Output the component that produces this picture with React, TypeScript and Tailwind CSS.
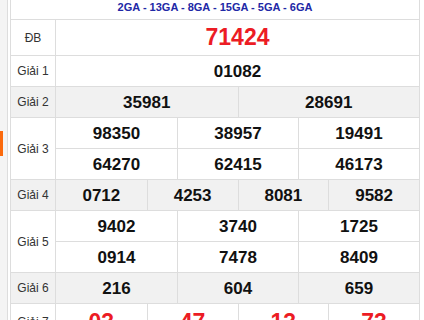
import React from "react";

const FONT = "font-['Liberation_Sans',Arial,sans-serif]";

type Val = { v: string; red?: boolean };

function Label({ text }: { text: string }) {
  return (
    <div className="w-[45px] shrink-0 border-r border-[#dddddd] flex items-center justify-center text-[12px] text-[#333333]">
      {text}
    </div>
  );
}

function Num({ v, red }: Val) {
  return red ? (
    <span className="text-[23px] leading-none font-bold text-[#ec1c24]">{v}</span>
  ) : (
    <span className="text-[17px] leading-none font-bold text-[#111111]">{v}</span>
  );
}

function Row({
  label,
  gray,
  cols,
  values,
  tall,
}: {
  label: string;
  gray?: boolean;
  cols: 1 | 2 | 3 | 4;
  values: Val[];
  tall?: boolean;
}) {
  const gridCls =
    cols === 1
      ? "grid-cols-1"
      : cols === 2
      ? "grid-cols-2"
      : cols === 3
      ? "grid-cols-3"
      : "grid-cols-4";
  const rowsCount = Math.ceil(values.length / cols);
  return (
    <div
      className={
        "flex border-b border-[#dddddd] " + (gray ? "bg-[#f1f1f1]" : "bg-white")
      }
    >
      <Label text={label} />
      <div className={"flex-1 grid " + gridCls}>
        {values.map((val, i) => {
          const col = i % cols;
          const r = Math.floor(i / cols);
          const last = r === rowsCount - 1;
          let cls = "flex items-center justify-center ";
          cls += tall ? "h-[35px] " : last ? "h-[30px] " : "h-[31px] border-b border-[#dddddd] ";
          if (col > 0) cls += "border-l border-[#dddddd] ";
          return (
            <div key={i} className={cls}>
              <Num {...val} />
            </div>
          );
        })}
      </div>
    </div>
  );
}

const n = (arr: string[], red = false): Val[] => arr.map((v) => ({ v, red }));

export default function App() {
  return (
    <div className={"w-[424px] h-[320px] overflow-hidden flex bg-white " + FONT}>
      <div className="w-[8px] shrink-0 bg-[#f4f4f4] border-r border-[#dddddd] flex flex-col">
        <div className="mt-[131px] h-[25px] w-[3px] bg-[#fb6a0d]" />
      </div>
      <div className="w-[410px] ml-[2px] shrink-0 border-l border-r border-[#dddddd] flex flex-col">
        <div className="h-[20px] shrink-0 border-b border-[#dddddd] pt-[1px] text-center text-[11px] leading-[13px] font-bold text-[#2128a6]">
          2GA - 13GA - 8GA - 15GA - 5GA - 6GA
        </div>
        <Row label="ĐB" cols={1} values={n(["71424"], true)} tall />
        <Row label="Giải 1" cols={1} values={n(["01082"])} />
        <Row label="Giải 2" gray cols={2} values={n(["35981", "28691"])} />
        <Row
          label="Giải 3"
          cols={3}
          values={n(["98350", "38957", "19491", "64270", "62415", "46173"])}
        />
        <Row label="Giải 4" gray cols={4} values={n(["0712", "4253", "8081", "9582"])} />
        <Row
          label="Giải 5"
          cols={3}
          values={n(["9402", "3740", "1725", "0914", "7478", "8409"])}
        />
        <Row label="Giải 6" gray cols={3} values={n(["216", "604", "659"])} />
        <div className="flex border-b border-[#dddddd] bg-white">
          <Label text="Giải 7" />
          <div className="flex-1 grid grid-cols-4">
            {["03", "47", "13", "73"].map((v, i) => (
              <div
                key={i}
                className={
                  "h-[36px] flex items-center justify-center " +
                  (i > 0 ? "border-l border-[#dddddd]" : "")
                }
              >
                <Num v={v} red />
              </div>
            ))}
          </div>
        </div>
      </div>
    </div>
  );
}
